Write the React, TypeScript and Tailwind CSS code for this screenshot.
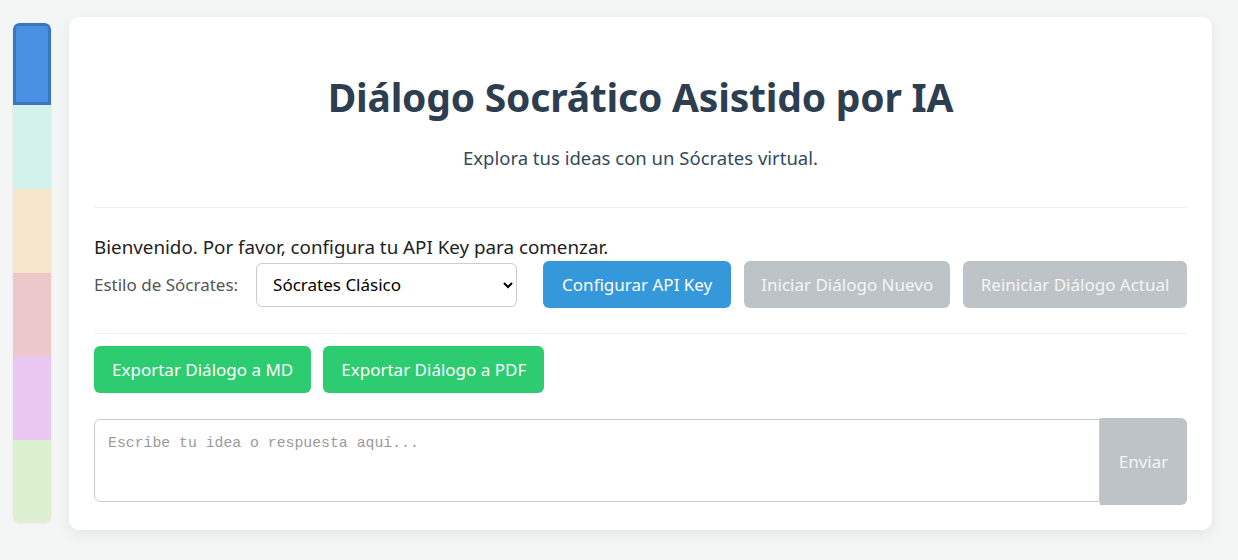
import { useState } from 'react';

// Segmentos de la barra lateral (fases del diálogo)
const segments = [
  { id: 'inicio', color: 'h-[82px] bg-[#4a90e2] border-[3px] border-[#3b76c0] rounded-t-[6px]' },
  { id: 'clarificar', color: 'h-[84px] bg-[#d4f2ec]' },
  { id: 'examinar', color: 'h-[84px] bg-[#f5e6cc]' },
  { id: 'refutar', color: 'h-[83px] bg-[#ecc8cb]' },
  { id: 'reconstruir', color: 'h-[84px] bg-[#e8c8f0]' },
  { id: 'cierre', color: 'h-[82px] bg-[#dcf0cf]' },
];

const font = "font-['Noto_Sans',_'Open_Sans',_sans-serif]";

export default function App() {
  const [style, setStyle] = useState('clasico');
  const [text, setText] = useState('');

  return (
    <div className={`min-h-[560px] bg-[#f4f6f6] flex items-start gap-[18px] pl-[13px] pr-[26px] pt-[17px] ${font}`}>
      {/* Barra lateral de fases */}
      <div className="mt-[6px] w-[38px] flex flex-col rounded-[6px] overflow-hidden shadow-[0_1px_3px_rgba(0,0,0,0.08)]">
        {segments.map((s) => (
          <div key={s.id} className={`shrink-0 ${s.color}`} />
        ))}
      </div>

      {/* Contenedor principal */}
      <div className="flex-1 bg-white rounded-[10px] shadow-[0_4px_14px_rgba(0,0,0,0.07)] px-[25px] pt-[25px] pb-[25px]">
        <div className="text-center pt-[31px] pb-[36px] border-b border-[#eeeeee]">
          <h1 className="text-[39px] leading-[48px] font-bold text-[#2c3e50] tracking-[-0.2px]">
            Diálogo Socrático Asistido por IA
          </h1>
          <p className="mt-[24px] text-[18.5px] leading-[26px] text-[#34495e]">
            Explora tus ideas con un Sócrates virtual.
          </p>
        </div>

        <div className="pt-[26px] pb-[25px] border-b border-[#eeeeee]">
          <p className="text-[18.8px] leading-[26px] text-[#222]">
            Bienvenido. Por favor, configura tu API Key para comenzar.
          </p>
          <div className="flex items-center mt-[1px]">
            <label className="text-[17px] text-[#555] mr-[18px]">Estilo de Sócrates:</label>
            <select
              value={style}
              onChange={(e) => setStyle(e.target.value)}
              className="w-[261px] h-[44px] pl-[12px] pr-[10px] border border-[#cccccc] rounded-[6px] bg-white text-[17px] text-black mr-[26px]"
            >
              <option value="clasico">Sócrates Clásico</option>
              <option value="ironico">Sócrates Irónico</option>
              <option value="mayeutico">Sócrates Mayéutico</option>
            </select>
            <div className="flex gap-[13px]">
              <button className="h-[47px] px-[19px] rounded-[6px] bg-[#3498db] text-white text-[17px]">
                Configurar API Key
              </button>
              <button disabled className="h-[47px] px-[17px] rounded-[6px] bg-[#bdc3c7] text-[#f4f6f7] text-[17px]">
                Iniciar Diálogo Nuevo
              </button>
              <button disabled className="h-[47px] px-[17.5px] rounded-[6px] bg-[#bdc3c7] text-[#f4f6f7] text-[17px]">
                Reiniciar Diálogo Actual
              </button>
            </div>
          </div>
        </div>

        <div className="flex gap-[12px] pt-[12px]">
          <button className="h-[47px] px-[18px] rounded-[6px] bg-[#2ecc71] text-white text-[17px]">
            Exportar Diálogo a MD
          </button>
          <button className="h-[47px] px-[18px] rounded-[6px] bg-[#2ecc71] text-white text-[17px]">
            Exportar Diálogo a PDF
          </button>
        </div>

        <div className="flex items-start mt-[25px]">
          <textarea
            value={text}
            onChange={(e) => setText(e.target.value)}
            placeholder="Escribe tu idea o respuesta aquí..."
            className="flex-1 h-[83px] mt-[1px] resize-none border border-[#cccccc] rounded-l-[6px] px-[13px] py-[14px] font-['Liberation_Mono',_monospace] text-[14.8px] leading-[18px] text-[#333] placeholder:text-[#9a9a9a] outline-none"
          />
          <button disabled className="w-[87px] h-[87px] rounded-r-[6px] bg-[#bdc3c7] text-[#f4f6f7] text-[17px]">
            Enviar
          </button>
        </div>
      </div>
    </div>
  );
}
